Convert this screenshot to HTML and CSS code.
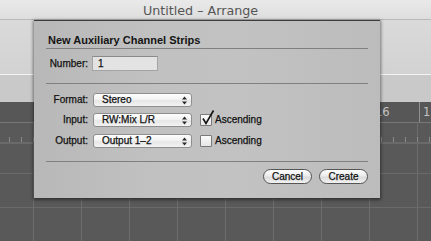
FILE: index.html
```html
<!DOCTYPE html>
<html>
<head>
<meta charset="utf-8">
<link rel="stylesheet" href="styles.css">
</head>
<body>
<div class="window">
  <div class="titlebar"><span class="title">Untitled – Arrange</span></div>
  <div class="toolbar"></div>
  <div class="strip"></div>
  <div class="arrange">
    <div class="ruler"><span class="bar">16</span><span class="bar">17</span></div>
    <div class="ticks"></div>
    <div class="grid"></div>
  </div>

  <div class="sheet">
    <div class="heading">New Auxiliary Channel Strips</div>
    <div class="sep sep-top"></div>
    <div class="row row-number">
      <span class="label">Number:</span>
      <div class="field">1</div>
    </div>
    <div class="sep sep-mid"></div>
    <div class="form">
      <div class="row">
        <span class="label">Format:</span>
        <div class="popup"><span class="popup-text">Stereo</span>
          <svg class="arrows" width="5" height="9" viewBox="0 0 5 9"><path d="M0 3.5 L2.5 0.5 L5 3.5 Z M0 5.5 L2.5 8.5 L5 5.5 Z" fill="#2a2a2a"/></svg>
        </div>
      </div>
      <div class="row">
        <span class="label">Input:</span>
        <div class="popup"><span class="popup-text">RW:Mix L/R</span>
          <svg class="arrows" width="5" height="9" viewBox="0 0 5 9"><path d="M0 3.5 L2.5 0.5 L5 3.5 Z M0 5.5 L2.5 8.5 L5 5.5 Z" fill="#2a2a2a"/></svg>
        </div>
        <span class="checkbox">
          <svg class="check" width="14" height="16" viewBox="0 0 14 16"><path d="M2 8.5 L5 13.5 L12.5 0.5" fill="none" stroke="#111" stroke-width="1.6" stroke-linejoin="miter"/></svg>
        </span>
        <span class="cb-label">Ascending</span>
      </div>
      <div class="row row-output">
        <span class="label">Output:</span>
        <div class="popup"><span class="popup-text">Output 1–2</span>
          <svg class="arrows" width="5" height="9" viewBox="0 0 5 9"><path d="M0 3.5 L2.5 0.5 L5 3.5 Z M0 5.5 L2.5 8.5 L5 5.5 Z" fill="#2a2a2a"/></svg>
        </div>
        <span class="checkbox"></span>
        <span class="cb-label">Ascending</span>
      </div>
    </div>
    <div class="sep sep-bottom"></div>
    <div class="buttons">
      <div class="button">Cancel</div>
      <div class="button">Create</div>
    </div>
  </div>
</div>
</body>
</html>
```

FILE: styles.css
```css
html, body {
  margin: 0;
  padding: 0;
}
body {
  width: 431px;
  height: 241px;
  overflow: hidden;
  background: #5a5a5a;
}
.window {
  position: relative;
  width: 431px;
  height: 241px;
  display: flex;
  flex-direction: column;
  overflow: hidden;
}
.titlebar {
  height: 19px;
  border-bottom: 1px solid #b9b9b9;
  background: linear-gradient(#e9e9e9, #dedede);
  display: flex;
  justify-content: center;
  align-items: center;
  padding-right: 30px;
}
.title {
  font-family: "DejaVu Sans", sans-serif;
  font-size: 12.7px;
  line-height: 15px;
  color: #555555;
  padding-top: 1px;
}
.toolbar {
  height: 54px;
  border-bottom: 1px solid #f4f4f4;
  background: linear-gradient(#dadada, #d2d2d2);
}
.strip {
  height: 27px;
  background: #c9c9c9;
}
.arrange {
  flex: 1;
  display: flex;
  flex-direction: column;
  background-color: #595959;
  background-image: repeating-linear-gradient(90deg, #6c6c6c 0, #6c6c6c 1px, transparent 1px, transparent 48px);
  background-position: 33px 0;
}
.ruler {
  height: 20px;
  border-bottom: 1px solid #777777;
  display: flex;
  padding-left: 371px;
  background: #575757;
}
.bar {
  width: 48px;
  flex: none;
  box-sizing: border-box;
  border-left: 1px solid #909090;
  padding-left: 3px;
  font-family: "DejaVu Sans", sans-serif;
  font-size: 11.5px;
  line-height: 16px;
  color: #c4c4c4;
  padding-top: 2px;
}
.ticks {
  height: 19px;
  border-bottom: 1px solid #6a6a6a;
  background-image: repeating-linear-gradient(90deg, #8a8a8a 0, #8a8a8a 1px, transparent 1px, transparent 12px);
  background-position: 9px 14px;
  background-size: 100% 5px;
  background-repeat: repeat-x;
}
.grid {
  flex: 1;
  background-image: repeating-linear-gradient(180deg, #6a6a6a 0, #6a6a6a 1px, transparent 1px, transparent 34px);
  background-position: 0 30px;
}

/* sheet dialog */
.sheet {
  position: absolute;
  left: 34px;
  top: 20px;
  width: 346px;
  height: 178px;
  box-sizing: border-box;
  border-top: 1px solid #3c3c3c;
  padding: 13px 12px 0 12px;
  background: linear-gradient(90deg, #b8b8b8 0%, #c1c1c1 35%, #c2c2c2 60%, #bcbcbc 100%);
  box-shadow: 0 1px 3px 1px rgba(0,0,0,0.45);
  display: flex;
  flex-direction: column;
  font-family: "Liberation Sans", Arial, sans-serif;
  font-size: 10px;
  color: #111111;
}
.heading {
  font-weight: bold;
  font-size: 11px;
  line-height: 13px;
  padding-left: 2px;
  color: #151515;
}
.sep {
  height: 0;
  border-top: 1px solid #808080;
}
.sep-top { margin-top: 1px; }
.sep-mid { margin-top: 12px; }
.sep-bottom { margin-top: 13px; }

.row {
  display: flex;
  align-items: center;
  height: 14px;
}
.row-number {
  height: 15px;
  margin-top: 7px;
}
.label {
  width: 42px;
  flex: none;
  text-align: right;
  margin-right: 5px;
  -webkit-text-stroke: 0.25px #111;
  line-height: 12px;
}
.field {
  width: 66px;
  height: 15px;
  box-sizing: border-box;
  margin-left: -1px;
  border: 1px solid #a4a4a4;
  border-top-color: #8a8a8a;
  background: #e3e3e3;
  padding-left: 5px;
  line-height: 13px;
  -webkit-text-stroke: 0.25px #111;
}
.form {
  margin-top: 9px;
  display: flex;
  flex-direction: column;
  gap: 6px;
}
.row-output { margin-top: 1px; }
.popup {
  width: 99px;
  height: 14px;
  box-sizing: border-box;
  border: 1px solid #8e8e8e;
  border-radius: 3px;
  background: linear-gradient(#fefefe, #f1f1f1 50%, #e6e6e6 55%, #f3f3f3);
  display: flex;
  align-items: center;
  justify-content: space-between;
  padding: 0 4px 0 8px;
  flex: none;
}
.popup-text {
  line-height: 12px;
  -webkit-text-stroke: 0.25px #111;
}
.arrows { display: block; }
.checkbox {
  position: relative;
  width: 12px;
  height: 12px;
  box-sizing: border-box;
  margin-left: 8px;
  border: 1px solid #7a7a7a;
  border-radius: 1px;
  background: linear-gradient(#fbfbfb, #e6e6e6);
  flex: none;
}
.check {
  position: absolute;
  left: 0px;
  top: -5px;
}
.cb-label {
  margin-left: 3px;
  line-height: 12px;
  -webkit-text-stroke: 0.25px #111;
}
.buttons {
  margin-top: 7px;
  display: flex;
  justify-content: flex-end;
  gap: 7px;
}
.button {
  width: 49px;
  height: 15px;
  box-sizing: border-box;
  border: 1px solid #555555;
  border-radius: 8px;
  background: linear-gradient(#ffffff, #ececec 45%, #dcdcdc 55%, #f2f2f2);
  text-align: center;
  line-height: 13px;
  -webkit-text-stroke: 0.25px #111;
}
```
